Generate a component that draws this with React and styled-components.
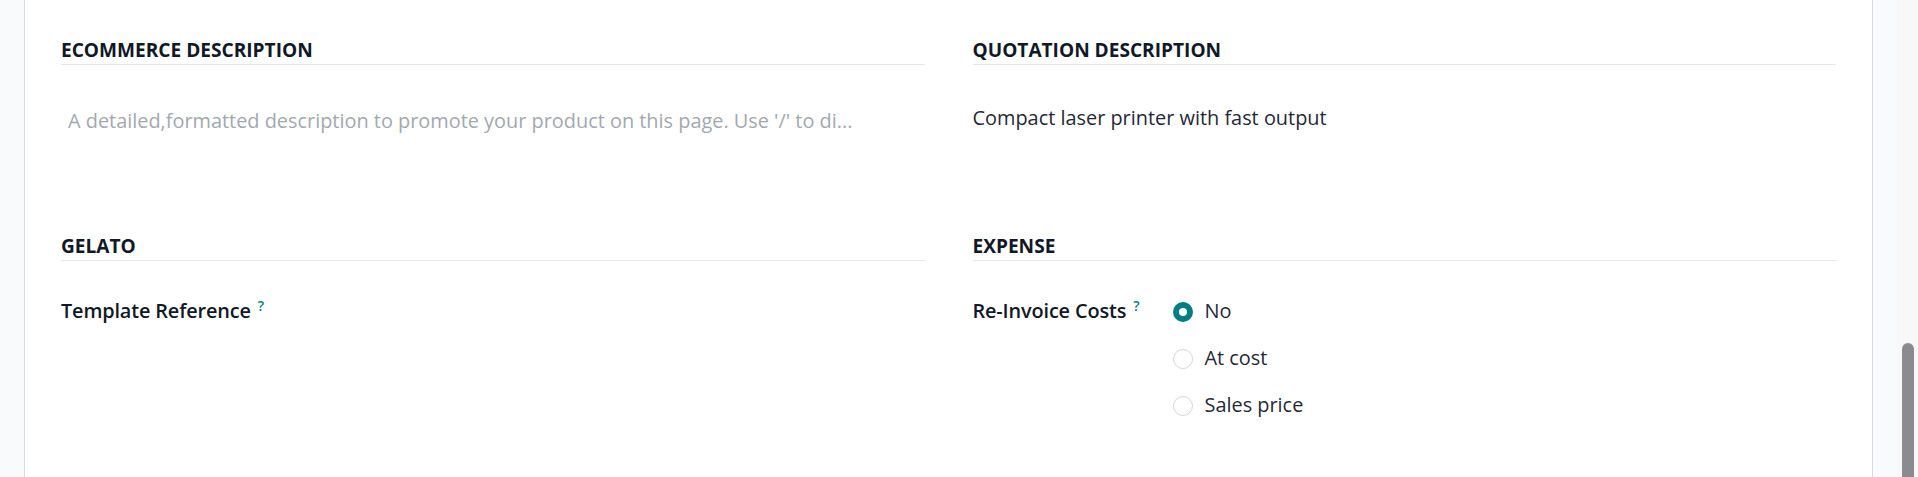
import React from 'react';
import styled, { createGlobalStyle } from 'styled-components';

const GlobalStyle = createGlobalStyle`
  html, body {
    margin: 0;
    padding: 0;
    background: #f9fafb;
    font-family: "Open Sans", "Noto Sans", sans-serif;
    color: #1f2937;
  }
  * { box-sizing: border-box; }
`;

const Page = styled.div`
  display: flex;
  height: 477px;
  overflow: hidden;
`;

const Gutter = styled.div`
  width: ${(p) => p.$w}px;
  flex-shrink: 0;
  background: #f9fafb;
`;

const Sheet = styled.main`
  flex: 1;
  background: #fff;
  border-left: 1px solid #d8dadd;
  border-right: 1px solid #d8dadd;
  padding: 37px 36px 0 36px;
`;

const Track = styled.div`
  width: 21px;
  flex-shrink: 0;
  background: #f8f8f9;
  display: flex;
  flex-direction: column;
  justify-content: flex-end;
  padding-left: 5px;
`;

const Thumb = styled.div`
  width: 12px;
  height: 134px;
  background: #8b8b8f;
  border-radius: 6px 6px 0 0;
`;

const Grid = styled.div`
  display: grid;
  grid-template-columns: 1fr 1fr;
  column-gap: 48px;
  row-gap: 98px;
`;

const Section = styled.section``;

const SectionTitle = styled.h3`
  margin: 0;
  font-size: 19.1px;
  font-weight: 700;
  line-height: 26px;
  text-transform: uppercase;
  color: #111827;
  padding-bottom: 1px;
  border-bottom: 1px solid #e5e7eb;
`;

const Description = styled.div`
  font-size: 19.9px;
  line-height: 28px;
  padding-top: ${(p) => (p.$placeholder ? 42 : 39)}px;
  padding-left: ${(p) => (p.$placeholder ? 7 : 0)}px;
  color: ${(p) => (p.$placeholder ? '#a3a8b0' : '#1f2937')};
  white-space: nowrap;
`;

const FieldRow = styled.div`
  display: grid;
  grid-template-columns: 200px 1fr;
  margin-top: 36px;
  font-size: 19.9px;
  line-height: 28px;
`;

const Label = styled.div`
  font-weight: 600;
  color: #111827;
  white-space: nowrap;
  letter-spacing: -0.15px;
`;

const Help = styled.sup`
  color: #017e84;
  font-size: 14px;
  font-weight: 600;
  margin-left: 7px;
  vertical-align: top;
  position: relative;
  top: -5px;
`;

const RadioList = styled.div`
  display: flex;
  flex-direction: column;
  gap: 19px;
`;

const RadioItem = styled.label`
  display: flex;
  align-items: center;
  gap: 12px;
  color: #1f2937;
`;

const RadioDot = styled.span`
  width: 20px;
  height: 20px;
  border-radius: 50%;
  background: #fff;
  flex-shrink: 0;
  margin-top: 2px;
  border: ${(p) => (p.$checked ? '6.5px solid #017e84' : '1px solid #d4d7dc')};
`;

const options = [
  { label: 'No', checked: true },
  { label: 'At cost', checked: false },
  { label: 'Sales price', checked: false },
];

export default function App() {
  return (
    <>
      <GlobalStyle />
      <Page>
        <Gutter $w={24} />
        <Sheet>
          <Grid>
            <Section>
              <SectionTitle>Ecommerce Description</SectionTitle>
              <Description $placeholder>
                A detailed,formatted description to promote your product on this page. Use '/' to di...
              </Description>
            </Section>
            <Section>
              <SectionTitle>Quotation Description</SectionTitle>
              <Description>Compact laser printer with fast output</Description>
            </Section>
            <Section>
              <SectionTitle>Gelato</SectionTitle>
              <FieldRow>
                <Label>
                  Template Reference<Help>?</Help>
                </Label>
              </FieldRow>
            </Section>
            <Section>
              <SectionTitle>Expense</SectionTitle>
              <FieldRow>
                <Label>
                  Re-Invoice Costs<Help>?</Help>
                </Label>
                <RadioList>
                  {options.map((o) => (
                    <RadioItem key={o.label}>
                      <RadioDot $checked={o.checked} />
                      {o.label}
                    </RadioItem>
                  ))}
                </RadioList>
              </FieldRow>
            </Section>
          </Grid>
        </Sheet>
        <Gutter $w={24} />
        <Track>
          <Thumb />
        </Track>
      </Page>
    </>
  );
}
